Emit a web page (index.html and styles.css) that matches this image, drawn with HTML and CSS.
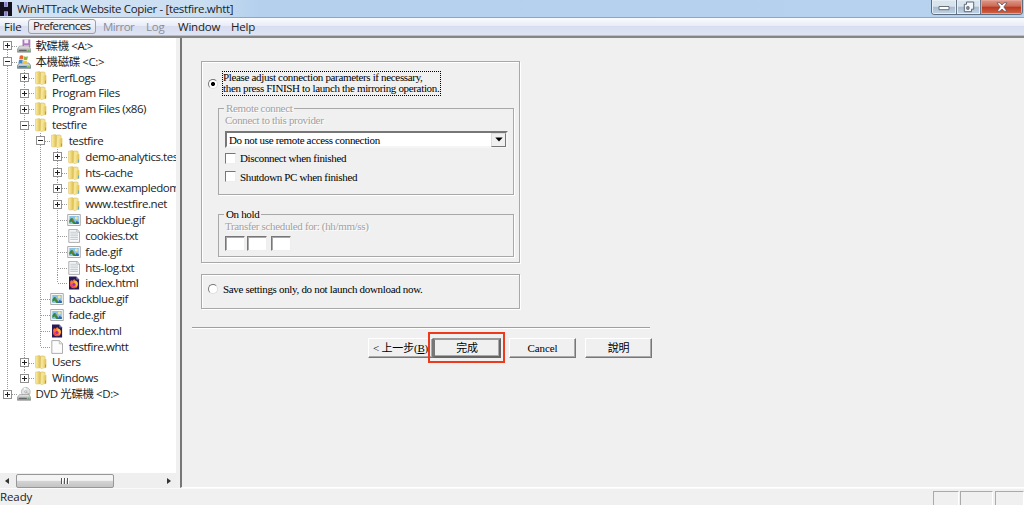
FILE: index.html
```
<!DOCTYPE html>
<html lang="zh-Hant">
<head>
  <meta charset="UTF-8" />
  <title>WinHTTrack Website Copier</title>
  <link rel="stylesheet" href="styles.css">
</head>
<body>
  <svg class="symbols" width="0" height="0">
    <defs>
      <linearGradient id="gold" x1="0" x2="1"><stop offset="0" stop-color="#fbf0a8"/><stop offset="1" stop-color="#dfbd4c"/></linearGradient>
      <linearGradient id="metal" x1="0" x2="0" y1="0" y2="1"><stop offset="0" stop-color="#eeeeee"/><stop offset="1" stop-color="#8c8f91"/></linearGradient>
    </defs>
    <symbol id="folder" viewBox="0 0 14 14">
      <path d="M1.5 1.2 5.5.5l1 1v11.3l-4.2.3-.8-.8z" fill="url(#gold)" stroke="#d8bc62" stroke-width=".5"/>
      <path d="M6.5 1h3.8l.8.8v10.7l-4 1.1-.9-.9z" fill="#f5e493" stroke="#cfb150" stroke-width=".5"/>
      <path d="M8.5 4.8 12.3 4v8.4l-5 1.2z" fill="url(#gold)"/>
      <path d="M11.5 9.5v3" stroke="#5fa9cf" stroke-width=".9"/>
    </symbol>
    <symbol id="floppy" viewBox="0 0 14 14">
      <path d="M5.5.5h7.8v7.8H5.5z" fill="#ad78bd"/>
      <path d="M7.3.5h4v3.8h-4z" fill="#f2eaf5"/><path d="M7 6h5v2.5H7z" fill="#dfcfe5"/>
      <path d="M2.5 7h9.3l1.9 3.2v3H.4v-3z" fill="url(#metal)" stroke="#777" stroke-width=".5"/>
      <path d="M2 11.3h7.5" stroke="#444" stroke-width=".9"/><path d="M11 11.3h1.3" stroke="#57b947"/>
    </symbol>
    <symbol id="drive" viewBox="0 0 14 14">
      <path d="M2.5 8h9.3l1.9 2.5v2.8H.4v-2.8z" fill="url(#metal)" stroke="#50646e" stroke-width=".6"/>
      <path d="M1.7 11.7h8" stroke="#316981" stroke-width="1"/><path d="M11 11.7h1.3" stroke="#6edb45"/>
      <path d="M2.8.9Q4.5-.2 6.5 1L5.9 4.3Q4 3.3 2.2 4.3z" fill="#e8632c"/>
      <path d="M7.1 1.2q2 1 3.8.1l-.6 3.5q-2 .7-3.8-.3z" fill="#8db83b"/>
      <path d="M2 5q2-1 3.8 0l-.6 3.4q-1.8-1-3.8 0z" fill="#3d8bcb"/>
      <path d="M6.3 5.3q2 .9 3.8.2l-.5 3.1q-2 .8-3.9-.2z" fill="#f3c52f"/>
    </symbol>
    <symbol id="dvd" viewBox="0 0 14 14">
      <circle cx="8.8" cy="4.8" r="4.4" fill="#e3e5e5" stroke="#a4a8a9" stroke-width=".7"/>
      <path d="M8.8 4.8 6.5 1.1l2-.6z" fill="#fff"/><path d="m9 5 3.8 1.6-.8 1.5z" fill="#9fc59b"/>
      <circle cx="8.8" cy="4.8" r="1.1" fill="#fff" stroke="#888" stroke-width=".6"/>
      <path d="M2.5 7.5h9.3l1.9 2.8v3H.4v-3z" fill="url(#metal)" stroke="#777" stroke-width=".5"/>
      <path d="M1.8 11.3h8" stroke="#555" stroke-width="1"/><path d="M11 11.3h1.3" stroke="#56a75c"/>
    </symbol>
    <symbol id="image" viewBox="0 0 14 14">
      <path d="M.7 1.5h12.6v11H.7z" fill="#f8f8f8" stroke="#999" stroke-width=".8"/>
      <path d="M2.3 3h9.5v8H2.3z" fill="#89c3e9"/>
      <circle cx="9.3" cy="5" r="1.5" fill="#f7e49a"/>
      <path d="M2.3 7.5q2.2-4 4-1.3L9 11H6.5L4.5 8.5 2.3 10z" fill="#348b37"/><path d="M7.5 11 9.5 8l2.3 1V11z" fill="#2f68a6"/>
      <path d="M5.3 5.5 7 7.5 5.8 9z" fill="#df5a37"/>
    </symbol>
    <symbol id="text" viewBox="0 0 14 14">
      <path d="M1.8.6h8.4l2.3 2.3v10.5H1.8z" fill="#f9fbfc" stroke="#999" stroke-width=".8"/>
      <path d="M3.3 3.2h6M3.3 5h7.7M3.3 6.8h7.7M3.3 8.6h7.7M3.3 10.4h7.7" stroke="#b0bdc5" stroke-width=".8"/>
      <path d="M9.8.7v2.5h2.5" fill="none" stroke="#999" stroke-width=".6"/>
    </symbol>
    <symbol id="blank" viewBox="0 0 14 14">
      <path d="M1.8.6h7.7l3 3v9.8H1.8z" fill="#fcfcfc" stroke="#999" stroke-width=".8"/>
      <path d="M9.3.7v3.1h3" fill="#eee" stroke="#aaa" stroke-width=".7"/>
    </symbol>
    <symbol id="firefox" viewBox="0 0 14 14">
      <path d="M2 .6h7.3l2.8 2.8v10H2z" fill="#261b56"/><path d="M9.3.6v2.8h2.8" fill="#8170ae"/>
      <path d="M3.2 5.6 4.3 4l.9 1Q6 3.3 8 3.3l-.3 1.4q3.5.5 3.2 4-.5 3.5-4 3.5t-4-3.7z" fill="#ff7139"/>
      <path d="M7.6 4.3q3.5.7 3.1 4.2-.5 2-1.8 2.7Q10 8 7 6.2z" fill="#ffbd32"/>
      <circle cx="6.8" cy="8.4" r="1.5" fill="#a12bbc"/>
      <path d="M3.2 6.5Q2.6 11.6 7 12.1q2 0 3-1.3-3.8.9-5.2-2z" fill="#f23e58"/>
    </symbol>
  </svg>

  <header class="titlebar">
    <svg class="app-icon" width="12" height="15" viewBox="0 0 12 15"><path d="M0 1h4v4.7h4V1h4v14H8v-4.5H4V15H0z" fill="#15121f"/><path d="M4.3 1h3.2v4.4H4.3zM4.3 10.8h3.2V15H4.3z" fill="#8c80c8"/></svg>
    <span class="title">WinHTTrack Website Copier - [testfire.whtt]</span>
    <div class="window-buttons">
      <button class="min"><svg width="12" height="6" viewBox="0 0 12 6"><path d="M1 1.5h10v3.2H1z" fill="#fff" stroke="#666f7a"/></svg></button>
      <button class="restore"><svg width="12" height="12" viewBox="0 0 12 12"><path d="M3.5 1h7.2v7.2H8.5v2.5H1.3V3.3h2.2z" fill="#f4f7f9" stroke="#5d6875"/><path d="M3.8 5.8H6v2.4H3.8z" fill="#9aabba" stroke="#5d6875"/></svg></button>
      <button class="close"><svg width="12" height="10" viewBox="0 0 12 10"><path d="M1 .8h3L6 3 8 .8h3L7.8 5 11 9.2H8L6 7 4 9.2H1L4.2 5z" fill="#fff" stroke="#64525a" stroke-width=".8"/></svg></button>
    </div>
  </header>

  <nav class="menubar">
    <span class="m-file">File</span>
    <span class="m-pref active">Preferences</span>
    <span class="m-mirror disabled">Mirror</span>
    <span class="m-log disabled">Log</span>
    <span class="m-window">Window</span>
    <span class="m-help">Help</span>
  </nav>

  <main class="workspace">
    <aside class="sidebar">
      <ul class="tree">
        <li><div class="row"><i class="box plus"></i><svg><use href="#floppy"/></svg><span>軟碟機 &lt;A:&gt;</span></div></li>
        <li><div class="row"><i class="box"></i><svg><use href="#drive"/></svg><span>本機磁碟 &lt;C:&gt;</span></div>
          <ul>
            <li><div class="row"><i class="box plus"></i><svg><use href="#folder"/></svg><span>PerfLogs</span></div></li>
            <li><div class="row"><i class="box plus"></i><svg><use href="#folder"/></svg><span>Program Files</span></div></li>
            <li><div class="row"><i class="box plus"></i><svg><use href="#folder"/></svg><span>Program Files (x86)</span></div></li>
            <li><div class="row"><i class="box"></i><svg><use href="#folder"/></svg><span>testfire</span></div>
              <ul>
                <li><div class="row"><i class="box"></i><svg><use href="#folder"/></svg><span>testfire</span></div>
                  <ul>
                    <li><div class="row"><i class="box plus"></i><svg><use href="#folder"/></svg><span>demo-analytics.tes</span></div></li>
                    <li><div class="row"><i class="box plus"></i><svg><use href="#folder"/></svg><span>hts-cache</span></div></li>
                    <li><div class="row"><i class="box plus"></i><svg><use href="#folder"/></svg><span>www.exampledom</span></div></li>
                    <li><div class="row"><i class="box plus"></i><svg><use href="#folder"/></svg><span>www.testfire.net</span></div></li>
                    <li><div class="row leaf"><svg><use href="#image"/></svg><span>backblue.gif</span></div></li>
                    <li><div class="row leaf"><svg><use href="#text"/></svg><span>cookies.txt</span></div></li>
                    <li><div class="row leaf"><svg><use href="#image"/></svg><span>fade.gif</span></div></li>
                    <li><div class="row leaf"><svg><use href="#text"/></svg><span>hts-log.txt</span></div></li>
                    <li><div class="row leaf"><svg><use href="#firefox"/></svg><span>index.html</span></div></li>
                  </ul>
                </li>
                <li><div class="row leaf"><svg><use href="#image"/></svg><span>backblue.gif</span></div></li>
                <li><div class="row leaf"><svg><use href="#image"/></svg><span>fade.gif</span></div></li>
                <li><div class="row leaf"><svg><use href="#firefox"/></svg><span>index.html</span></div></li>
                <li><div class="row leaf"><svg><use href="#blank"/></svg><span>testfire.whtt</span></div></li>
              </ul>
            </li>
            <li><div class="row"><i class="box plus"></i><svg><use href="#folder"/></svg><span>Users</span></div></li>
            <li><div class="row"><i class="box plus"></i><svg><use href="#folder"/></svg><span>Windows</span></div></li>
          </ul>
        </li>
        <li><div class="row"><i class="box plus"></i><svg><use href="#dvd"/></svg><span>DVD 光碟機 &lt;D:&gt;</span></div></li>
      </ul>
      <div class="scrollbar">
        <svg class="arrow" width="16" height="14" viewBox="0 0 16 14"><path d="M9 4v6L5 7z" fill="#333"/></svg>
        <div class="thumb"><i></i><i></i><i></i></div>
        <svg class="arrow" width="16" height="14" viewBox="0 0 16 14"><path d="M7 4v6l4-3z" fill="#333"/></svg>
      </div>
    </aside>

    <section class="content">
      <div class="group launch">
        <div class="choice">
          <i class="radio checked"></i>
          <p class="focus">Please adjust connection parameters if necessary,<br>then press FINISH to launch the mirroring operation.</p>
        </div>
        <fieldset class="remote">
          <legend class="dim">Remote connect</legend>
          <div class="dim">Connect to this provider</div>
          <div class="combo"><span>Do not use remote access connection</span><b><svg width="8" height="5" viewBox="0 0 8 5"><path d="M.3.5h7.4L4 4.5z"/></svg></b></div>
          <div class="check"><i></i><span>Disconnect when finished</span></div>
          <div class="check"><i></i><span>Shutdown PC when finished</span></div>
        </fieldset>
        <fieldset class="hold">
          <legend>On hold</legend>
          <div class="dim">Transfer scheduled for: (hh/mm/ss)</div>
          <div class="times"><i></i><i></i><i></i></div>
        </fieldset>
      </div>
      <div class="group save">
        <i class="radio"></i><span>Save settings only, do not launch download now.</span>
      </div>
      <div class="divider"></div>
      <div class="buttons">
        <button class="back">&lt; 上一步(<u>B</u>)</button>
        <div class="finish-wrap"><button class="finish">完成</button><div class="highlight"></div></div>
        <button class="cancel">Cancel</button>
        <button class="help">說明</button>
      </div>
    </section>
  </main>

  <footer class="statusbar">
    <span>Ready</span>
    <i class="p1"></i><i class="p2"></i><i class="p3"></i>
  </footer>
</body>
</html>
```
FILE: styles.css
```
* {
  box-sizing: border-box;
}

body {
  margin: 0;
  width: 1024px;
  height: 505px;
  overflow: hidden;
  display: flex;
  flex-direction: column;
  background: #f0f0f0;
  color: #222;
  font: 11.5px/16px "Open Sans", "Noto Sans CJK TC", sans-serif;
  letter-spacing: -0.1px;
  white-space: nowrap;
}

.symbols {
  position: absolute;
}

button {
  padding: 0;
  font: inherit;
  letter-spacing: inherit;
  color: #000;
}

/* title bar */
.titlebar {
  height: 18px;
  flex: none;
  display: flex;
  align-items: flex-start;
  background: linear-gradient(90deg, #d3e2f2 0, #cbdff2 200px, #b4d0ed 260px, #b6d2ee 100%);
  border-bottom: 1px solid #94a5b9;
}

.app-icon {
  margin-top: 1px;
}

.title {
  margin-left: 5px;
  line-height: 17px;
  letter-spacing: -0.35px;
}

.window-buttons {
  display: flex;
  margin-left: auto;
  margin-right: 1px;
  height: 15px;
  border: 1px solid #5d6c7e;
  border-top: 0;
  border-radius: 0 0 4px 4px;
  overflow: hidden;
}

.window-buttons button {
  display: flex;
  align-items: center;
  justify-content: center;
  border: 0;
  border-right: 1px solid #667587;
  background: linear-gradient(#d9e3ed 0 45%, #a9bccf 50%, #c1d4e6);
  box-shadow: inset 0 0 0 1px #e5edf5;
  padding-bottom: 1px;
}

.window-buttons .min {
  width: 25px;
  padding-top: 2px;
}

.window-buttons .restore {
  width: 24px;
}

.window-buttons .close {
  width: 41px;
  border-right: 0;
  background: linear-gradient(#dc9a8b 0, #cb6954 45%, #b93620 50%, #d2684a);
  box-shadow: inset 0 0 0 1px #e5a497;
}

/* menu */
.menubar {
  height: 18px;
  flex: none;
  display: flex;
  align-items: center;
  background: linear-gradient(#fafbfe 0, #e8ecf7 45%, #d8def0 50%, #dfe4f4);
  border-bottom: 1px solid #b8bccb;
  letter-spacing: -0.2px;
}

.menubar span {
  line-height: 14px;
}

.m-file {
  margin-left: 4px;
  width: 24px;
}

.m-pref {
  width: 68px;
  height: 15px;
  padding-left: 4px;
  letter-spacing: -0.6px;
}

.m-mirror {
  margin-left: 7px;
  width: 43px;
  letter-spacing: -0.5px;
}

.m-log {
  width: 32px;
}

.m-window {
  width: 53px;
}

.menubar .active {
  line-height: 12px;
  border: 1px solid #9c9ea8;
  border-radius: 3px;
  background: linear-gradient(#f6f6f9, #dfe1ea);
}

.menubar .disabled {
  color: #8c8e96;
}

/* tree */
.workspace {
  flex: 1;
  display: flex;
  min-height: 0;
  border-top: 2px solid #858585;
}

.sidebar {
  width: 180px;
  display: flex;
  flex-direction: column;
  border-right: 4px solid #f0f0f0;
  background: #fff;
}

.tree {
  flex: 1;
  overflow: hidden;
  letter-spacing: -0.43px;
}

ul {
  list-style: none;
  margin: 0;
  padding: 0;
}

ul ul {
  padding-left: 16.6px;
}

li {
  background: repeating-linear-gradient(#999 0 1px, transparent 1px 2px) 7px 0 / 1px 100% no-repeat;
}

li:last-child {
  background-size: 1px 8px;
}

.tree > li:first-child {
  background-position: 7px 8px;
}

.row {
  height: 15.84px;
  display: flex;
  align-items: center;
  padding-left: 3px;
  background: repeating-linear-gradient(90deg, #999 0 1px, transparent 1px 2px) 8px 8px / 9px 1px no-repeat;
}

.leaf {
  padding-left: 12px;
}

.row svg {
  width: 14px;
  height: 14px;
  flex: none;
  margin-left: 5px;
}

.row span {
  margin-left: 4.5px;
  line-height: 16px;
}

.box {
  width: 9px;
  height: 9px;
  flex: none;
  border: 1px solid #8f8f8f;
  background: linear-gradient(#222, #222) 1px 3px / 5px 1px no-repeat, #fff;
}

.plus {
  background: linear-gradient(#222, #222) 1px 3px / 5px 1px no-repeat, linear-gradient(#222, #222) 3px 1px / 1px 5px no-repeat, #fff;
}

.scrollbar {
  height: 15px;
  display: flex;
  align-items: center;
  background: #efefef;
}

.thumb {
  width: 98px;
  height: 14px;
  margin-right: auto;
  display: flex;
  align-items: center;
  justify-content: center;
  gap: 1px;
  border: 1px solid #979797;
  border-radius: 2px;
  background: linear-gradient(#f4f4f4 0 45%, #d4d4d4 50%, #c4c4c4);
}

.thumb i {
  width: 2px;
  height: 6px;
  border-left: 1px solid #555;
  border-right: 1px solid #fff;
}

/* wizard page */
.content {
  flex: 1;
  padding: 23px 0 0 19px;
  border-left: 2px solid #777;
  border-bottom: 1px solid #fff;
  color: #000;
  font: 11px/12px "Liberation Serif", "Noto Sans CJK TC", serif;
  letter-spacing: -0.34px;
}

.group {
  width: 319px;
  border: 1px solid #a8a8a8;
  box-shadow: 1px 1px #fff, inset 1px 1px #fff;
}

.launch {
  height: 202px;
  padding: 9px 5px 0 6px;
}

.choice {
  display: flex;
  align-items: center;
}

.radio {
  width: 10px;
  height: 10px;
  flex: none;
  border: 1px solid;
  border-color: #777 #ddd #ddd #777;
  border-radius: 50%;
  background: #fff;
}

.checked {
  background: radial-gradient(#000 0 1.8px, #fff 2.3px);
}

.focus {
  margin: 0 0 0 4px;
  width: 219px;
  height: 25px;
  line-height: 11px;
  border: 1px dotted #000;
}

fieldset {
  margin: 0 0 0 10px;
  padding: 0 6px;
  min-width: 0;
  border: 1px solid #a8a8a8;
  box-shadow: 1px 1px #fff;
}

legend {
  margin-left: -1px;
  padding: 0 2px;
  height: 12px;
}

.dim {
  color: #a2a2a2;
  text-shadow: 1px 1px #fff;
}

.remote {
  margin-top: 6px;
  height: 93px;
}

.combo {
  display: flex;
  align-items: center;
  width: 283px;
  height: 17px;
  margin-top: 5px;
  margin-bottom: 1px;
  padding-left: 2px;
  border: 2px solid;
  border-color: #777 #f5f5f5 #f5f5f5 #777;
  background: #fff;
}

.combo b {
  width: 15px;
  height: 14px;
  margin-left: auto;
  display: flex;
  align-items: center;
  justify-content: center;
  background: #f0f0f0;
  border: 1px solid;
  border-color: #ddd #777 #777 #ddd;
}

.check {
  height: 18.5px;
  display: flex;
  align-items: center;
}

.check i {
  width: 11px;
  height: 11px;
  margin-right: 4px;
  border: 1px solid;
  border-color: #777 #eee #eee #777;
  background: #fff;
}

.hold {
  margin-top: 13px;
  height: 49px;
}

.times {
  display: flex;
  margin-top: 4px;
}

.times i {
  width: 20px;
  height: 15px;
  margin-right: 2px;
  border: 1px solid;
  border-color: #777 #eee #eee #777;
  box-shadow: inset 1px 1px #aaa;
  background: #fff;
}

.times i:nth-child(2) {
  margin-right: 4px;
}

.save {
  height: 35px;
  margin-top: 11px;
  padding: 0 0 5px 6px;
  display: flex;
  align-items: center;
}

.save span {
  margin-left: 5px;
  letter-spacing: -0.32px;
}

.divider {
  width: 458px;
  height: 2px;
  margin: 18px 0 0 -9px;
  border-top: 1px solid #a0a0a0;
  border-bottom: 1px solid #fff;
}

.buttons {
  display: flex;
  margin: 9px 0 0 167px;
}

.buttons button {
  width: 67px;
  height: 20px;
  background: #f0f0f0;
  border: 1px solid;
  border-color: #fff #777 #777 #fff;
  box-shadow: inset -1px -1px #aaa;
}

.buttons .back {
  width: 65px;
  letter-spacing: -0.2px;
}

.finish-wrap {
  position: relative;
}

.buttons .finish {
  width: 68px;
  border: 2px solid;
  border-color: #999 #666 #666 #777;
}

/* red marker drawn over the finish button */
.highlight {
  position: absolute;
  left: -5px;
  top: -6px;
  width: 77px;
  height: 31px;
  border: 2px solid #ee3a1c;
}

.buttons .cancel {
  margin-left: 8px;
  letter-spacing: -0.1px;
}

.help {
  margin-left: 9px;
}

/* status bar */
.statusbar {
  height: 17px;
  flex: none;
  display: flex;
  border-top: 1px solid #fafafa;
}

.statusbar span {
  margin-right: auto;
}

.statusbar i {
  height: 16px;
  margin-top: 2px;
  border: 1px solid;
  border-color: #aaa #fff #fff #aaa;
}

.p1 {
  width: 26px;
}

.p2 {
  width: 33px;
  margin-left: 1px;
}

.p3 {
  width: 29px;
  margin-left: 2px;
}
```
